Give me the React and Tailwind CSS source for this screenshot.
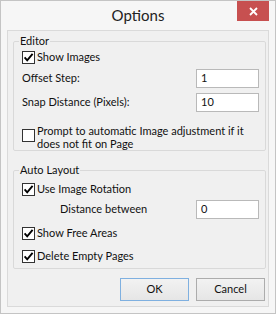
import React from 'react';

const Check = ({ checked }) => (
    <span className="w-[13px] h-[13px] shrink-0 border border-[#333] bg-white flex items-center justify-center">
        {checked && (
            <svg width="11" height="11" viewBox="0 0 11 11">
                <path d="M1.6 5.4 L4.2 8.3 L9.6 1.9" fill="none" stroke="#000" strokeWidth="1.9" />
            </svg>
        )}
    </span>
);

const CheckRow = ({ label, checked, className = '' }) => (
    <div className={`h-[18px] pl-[8px] flex items-center gap-[2px] ${className}`}>
        <Check checked={checked} />
        <span>{label}</span>
    </div>
);

const FieldRow = ({ label, value, indent = 'pl-[8px]', className = '' }) => (
    <div className={`h-[19px] pr-[6px] flex items-center justify-between ${indent} ${className}`}>
        <span>{label}</span>
        <div className="w-[63px] h-[19px] border border-[#b9b9b9] bg-white flex items-center px-[4px]">
            {value}
        </div>
    </div>
);

const Group = ({ title, className = '', children }) => (
    <fieldset className={`ml-[5px] w-[253px] border border-[#d9d9d9] rounded-[2px] ${className}`}>
        <legend className="ml-[5px] px-[1px] leading-[14px]">{title}</legend>
        {children}
    </fieldset>
);

const Button = ({ children, primary }) => (
    <button
        className={`w-[69px] h-[23px] border bg-gradient-to-b from-[#f2f2f2] to-[#e6e6e6] flex items-center justify-center ${
            primary ? 'border-[#7fb0e0]' : 'border-[#acacac]'
        }`}
    >
        {children}
    </button>
);

export default function App() {
    return (
        <div className="w-[276px] h-[314px] bg-[#f6f6f6] border border-[#c4c4c4] flex flex-col font-['Lato',sans-serif] text-[11px] text-[#111]">
            {/* Title bar */}
            <div className="relative h-[29px] flex items-center justify-center">
                <span className="text-[15px] text-[#222]">Options</span>
                <div className="absolute top-0 right-[6px] w-[32px] h-[20px] bg-[#c75050] flex items-center justify-center">
                    <svg width="9" height="9" viewBox="0 0 9 9">
                        <path d="M1 1 L8 8 M8 1 L1 8" stroke="#fff" strokeWidth="1.8" />
                    </svg>
                </div>
            </div>

            {/* Client area */}
            <div className="mx-[6px] h-[277px] border border-[#dadada] bg-[#f0f0f0] flex flex-col">
                <Group title="Editor" className="mt-[3px]">
                    <CheckRow label="Show Images" checked />
                    <FieldRow label="Offset Step:" value="1" className="mt-[3px]" />
                    <FieldRow label="Snap Distance (Pixels):" value="10" className="mt-[5px]" />
                    <div className="mt-[12px] pl-[8px] flex items-start gap-[2px]">
                        <span className="mt-[5px]">
                            <Check />
                        </span>
                        <span className="leading-[13px]">
                            Prompt to automatic Image adjustment if it
                            <br />
                            does not fit on Page
                        </span>
                    </div>
                </Group>

                <Group title="Auto Layout" className="mt-[12px] pb-[3px]">
                    <CheckRow label="Use Image Rotation" checked className="mt-[3px]" />
                    <FieldRow label="Distance between" value="0" indent="pl-[46px]" className="mt-[2px]" />
                    <CheckRow label="Show Free Areas" checked className="mt-[5px]" />
                    <CheckRow label="Delete Empty Pages" checked className="mt-[5px]" />
                </Group>

                <div className="mt-[9px] pr-[3px] flex justify-end gap-[7px]">
                    <Button primary>OK</Button>
                    <Button>Cancel</Button>
                </div>
            </div>
        </div>
    );
}
